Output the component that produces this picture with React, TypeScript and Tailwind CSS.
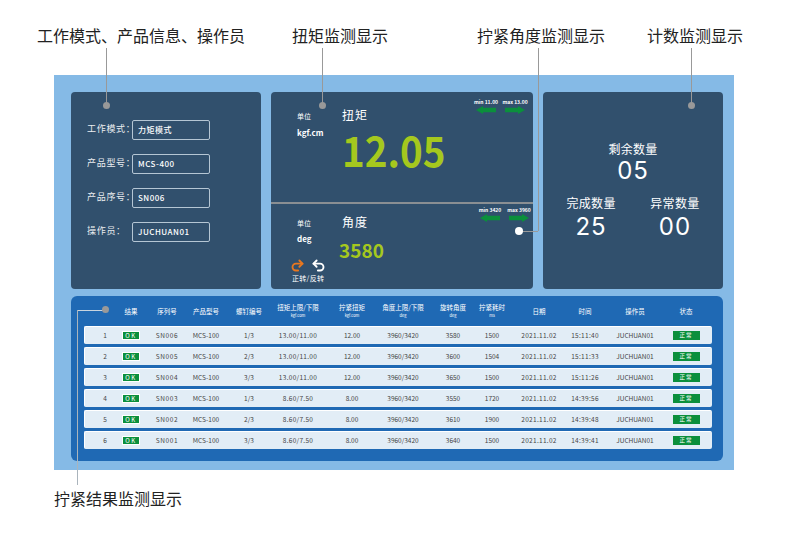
import { Redo2, Undo2 } from 'lucide-react';

const cols = 'grid grid-cols-[20px_32px_40px_38px_48px_50px_58px_44px_56px_22px_72px_20px_80px_22px] items-center';

const headers: [string, string?][] = [
  [''],
  ['结果'],
  ['序列号'],
  ['产品型号'],
  ['螺钉编号'],
  ['扭矩上限/下限', 'kgf.com'],
  ['拧紧扭矩', 'kgf.com'],
  ['角度上限/下限', 'deg'],
  ['旋转角度', 'deg'],
  ['拧紧耗时', 'ms'],
  ['日期'],
  ['时间'],
  ['操作员'],
  ['状态'],
];

const rows = [
  ['1', 'SN006', 'MCS-100', '1/3', '13.00/11.00', '12.00', '3960/3420', '3580', '1500', '15:11:40'],
  ['2', 'SN005', 'MCS-100', '2/3', '13.00/11.00', '12.00', '3960/3420', '3600', '1504', '15:11:33'],
  ['3', 'SN004', 'MCS-100', '3/3', '13.00/11.00', '12.00', '3960/3420', '3650', '1500', '15:11:26'],
  ['4', 'SN003', 'MCS-100', '1/3', '8.60/7.50', '8.00', '3960/3420', '3550', '1720', '14:39:56'],
  ['5', 'SN002', 'MCS-100', '2/3', '8.60/7.50', '8.00', '3960/3420', '3610', '1900', '14:39:48'],
  ['6', 'SN001', 'MCS-100', '3/3', '8.60/7.50', '8.00', '3960/3420', '3640', '1500', '14:39:41'],
];

const fields = [
  ['工作模式：', '力矩模式'],
  ['产品型号：', 'MCS-400'],
  ['产品序号：', 'SN006'],
  ['操作员：', 'JUCHUAN01'],
];

function Cell({ children }: { children: React.ReactNode }) {
  return <div className="flex min-w-0 justify-center whitespace-nowrap">{children}</div>;
}

function Arrow({ flip }: { flip?: boolean }) {
  return (
    <svg width="20" height="8" viewBox="0 0 20 8" className={flip ? 'rotate-180' : ''}>
      <path d="M0 1.800h13V0l7 4-7 4V6.200H0z" fill="#0b8f3c" />
    </svg>
  );
}

function Limits({ min, max }: { min: string; max: string }) {
  return (
    <div className="flex gap-[9px]">
      <div className="flex w-[20px] flex-col items-center">
        <span className="whitespace-nowrap text-[5px] leading-[8px] font-bold text-white">min {min}</span>
        <Arrow flip />
      </div>
      <div className="flex w-[20px] flex-col items-center">
        <span className="whitespace-nowrap text-[5px] leading-[8px] font-bold text-white">max {max}</span>
        <Arrow />
      </div>
    </div>
  );
}

function Count({ label, value, low }: { label: string; value: string; low?: boolean }) {
  return (
    <div className="flex flex-col items-center text-white">
      <div className="text-[12px] leading-[18px] tracking-[0.3px]">{label}</div>
      <div className={`${low ? 'mt-[3px]' : 'mt-[1px]'} font-['Inter',sans-serif] text-[24px] leading-[24px] tracking-[1px]`}>
        {value}
      </div>
    </div>
  );
}

export default function App() {
  return (
    <div className="relative h-[543px] w-[800px] overflow-hidden bg-white font-['Noto_Sans_CJK_SC','Noto_Sans',sans-serif] text-[#222]">
      <div className="flex h-[75px] items-center pb-[6px] pl-[37px] text-[16px] whitespace-nowrap">
        <div>工作模式、产品信息、操作员</div>
        <div className="ml-[47px]">扭矩监测显示</div>
        <div className="ml-[89px]">拧紧角度监测显示</div>
        <div className="ml-[42px]">计数监测显示</div>
      </div>

      <div className="mx-[54px] h-[395px] w-[680px] bg-[#85bae6] pt-[17px] pl-[17px]">
        <div className="flex h-[197px] gap-[10px]">
          <div className="w-[190px] rounded-[4px] bg-[#31506d] pt-[28px] pl-[16px]">
            <div className="flex flex-col gap-[14px]">
              {fields.map(([label, value]) => (
                <div key={label} className="flex items-center text-white">
                  <div className="w-[45px] pb-[3px] text-[9px] leading-[12px] tracking-[0.7px] whitespace-nowrap opacity-90">{label}</div>
                  <div className="flex h-[20px] w-[78px] items-center rounded-[2px] border border-[#b5c6d4] pl-[5px] text-[8px] font-medium tracking-[0.5px]">
                    {value}
                  </div>
                </div>
              ))}
            </div>
          </div>

          <div className="flex w-[262px] flex-col rounded-[4px] bg-[#31506d] text-white">
            <div className="flex h-[112px] border-b-2 border-[#8a8f93]">
              <div className="flex w-[71px] flex-col items-start pt-[19px] pl-[26px]">
                <div className="text-[7px] leading-[10px]">单位</div>
                <div className="mt-[7px] text-[8px] leading-[10px] font-semibold">kgf.cm</div>
              </div>
              <div className="flex-1 pt-[14px]">
                <div className="text-[12px] leading-[18px] tracking-[1px]">扭矩</div>
                <div className="mt-[3px] origin-left scale-x-[0.94] text-[41px] leading-[44px] font-bold text-[#a5c81e]">12.05</div>
              </div>
              <div className="pt-[6px] pr-[8px]">
                <Limits min="11.00" max="13.00" />
              </div>
            </div>
            <div className="flex flex-1">
              <div className="flex w-[71px] flex-col items-start pt-[14px] pl-[26px]">
                <div className="text-[7px] leading-[10px]">单位</div>
                <div className="mt-[6px] text-[8px] leading-[10px] font-semibold">deg</div>
                <div className="mt-[14px] -ml-[7px] flex gap-[6px]">
                  <Redo2 size={15} strokeWidth={3} className="text-[#e8771f]" />
                  <Undo2 size={15} strokeWidth={3} className="text-white" />
                </div>
                <div className="mt-[1px] -ml-[5px] text-[7px] leading-[9px] tracking-[0.3px] whitespace-nowrap">正转/反转</div>
              </div>
              <div className="flex-1 pt-[9px]">
                <div className="text-[12px] leading-[18px] tracking-[1px]">角度</div>
                <div className="mt-[6px] -ml-[3px] text-[19px] leading-[26px] font-semibold text-[#a5c81e]">3580</div>
              </div>
              <div className="pt-[2px] pr-[4px]">
                <Limits min="3420" max="3960" />
              </div>
            </div>
          </div>

          <div className="flex w-[180px] flex-col items-center rounded-[4px] bg-[#31506d] pt-[48px]">
            <Count label="剩余数量" value="05" />
            <div className="mt-[11px] flex w-[133px] justify-between">
              <Count label="完成数量" value="25" low />
              <Count label="异常数量" value="00" low />
            </div>
          </div>
        </div>

        <div className="mt-[7px] h-[165px] w-[652px] rounded-[6px] bg-[#1f69b4] pt-[1px]">
          <div className={`${cols} h-[29px] pb-[1px] pl-[24px] text-white`}>
            {headers.map(([title, unit], i) => (
              <Cell key={i}>
                <div className="flex flex-col items-center">
                  <div className="text-[6.5px] leading-[9px]">{title}</div>
                  {unit && <div className="text-[4px] leading-[7px]">{unit}</div>}
                </div>
              </Cell>
            ))}
          </div>
          <div className="flex flex-col gap-[2.800px] pl-[13px]">
            {rows.map((r) => (
              <div
                key={r[0]}
                className={`${cols} h-[18.200px] w-[628px] rounded-[2px] border-t border-l border-white bg-[#e2edf6] pl-[10px] text-[6.5px] text-[#444]`}
              >
                <Cell>{r[0]}</Cell>
                <Cell>
                  <span className="border-[0.5px] border-white bg-[#0b8f3c] px-[2.500px] text-[6px] leading-[7px] tracking-[1.5px] text-white">OK</span>
                </Cell>
                <Cell><span className="tracking-[0.6px]">{r[1]}</span></Cell>
                <Cell>{r[2]}</Cell>
                <Cell>{r[3]}</Cell>
                <Cell><span className="tracking-[0.3px]">{r[4]}</span></Cell>
                <Cell>{r[5]}</Cell>
                <Cell>{r[6]}</Cell>
                <Cell>{r[7]}</Cell>
                <Cell>{r[8]}</Cell>
                <Cell><span className="tracking-[0.3px]">2021.11.02</span></Cell>
                <Cell><span className="tracking-[0.3px]">{r[9]}</span></Cell>
                <Cell>JUCHUAN01</Cell>
                <Cell>
                  <span className="bg-[#0b8f3c] px-[7px] text-[5.500px] leading-[9px] tracking-[1px] text-white">正常</span>
                </Cell>
              </div>
            ))}
          </div>
        </div>
      </div>

      <div className="pt-[16px] pl-[54px] text-[16px] leading-[24px]">拧紧结果监测显示</div>

      {/* leader lines over the panels */}
      <div className="absolute top-[48px] left-[106px] h-[57px] w-[1px] bg-[#999]" />
      <div className="absolute top-[102px] left-[103px] h-[7px] w-[7px] rounded-full bg-[#999]" />
      <div className="absolute top-[48px] left-[322px] h-[57px] w-[1px] bg-[#999]" />
      <div className="absolute top-[102px] left-[319px] h-[7px] w-[7px] rounded-full bg-[#999]" />
      <div className="absolute top-[48px] left-[691px] h-[57px] w-[1px] bg-[#999]" />
      <div className="absolute top-[102px] left-[688px] h-[7px] w-[7px] rounded-full bg-[#999]" />
      <div className="absolute top-[48px] left-[538px] h-[183px] w-[1px] bg-[#999]" />
      <div className="absolute top-[231px] left-[520px] h-[1px] w-[18px] bg-[#999]" />
      <div className="absolute top-[227px] left-[515px] h-[8px] w-[8px] rounded-full bg-white" />
      <div className="absolute top-[310px] left-[77px] h-[1px] w-[28px] bg-[#c8d4df]" />
      <div className="absolute top-[310px] left-[77px] h-[175px] w-[1px] bg-[#aab4bc]" />
      <div className="absolute top-[306px] left-[102px] h-[7px] w-[7px] rounded-full bg-[#999]" />
    </div>
  );
}
